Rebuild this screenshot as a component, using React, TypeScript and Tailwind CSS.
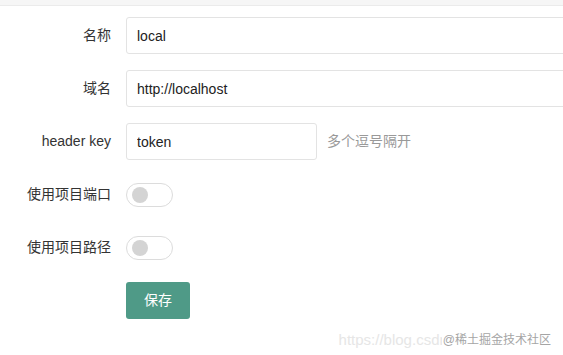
import React from "react"

const font = { fontFamily: '"Liberation Sans", Arial, "Noto Sans CJK SC", sans-serif' }

function Row({ label, children }: { label: string; children: React.ReactNode }) {
  return (
    <div className="flex items-center h-[37px] mb-[16px]">
      <label className="w-[111px] shrink-0 text-right text-[14px] text-[#333]">{label}</label>
      <div className="ml-[15px] flex items-center flex-1 min-w-0">{children}</div>
    </div>
  )
}

function Switch() {
  return (
    <div className="w-[47px] h-[24px] rounded-full border border-[#dcdcdc] bg-white flex items-center pl-[5px]">
      <div className="w-[16px] h-[16px] rounded-full bg-[#d4d4d4]" />
    </div>
  )
}

export default function App() {
  return (
    <div className="relative w-[563px] h-[355px] bg-white overflow-hidden" style={font}>
      <div className="h-[6px] bg-[#f6f6f6] border-b border-[#ebebeb]" />
      <div className="pt-[11px]">
        <Row label="名称">
          <input
            defaultValue="local"
            className="w-[460px] shrink-0 h-[37px] border border-[#e3e3e3] rounded-[3px] px-[10px] text-[14px] text-[#222] outline-none"
          />
        </Row>
        <Row label="域名">
          <input
            defaultValue="http://localhost"
            className="w-[460px] shrink-0 h-[37px] border border-[#e3e3e3] rounded-[3px] px-[10px] text-[14px] text-[#222] outline-none"
          />
        </Row>
        <Row label="header key">
          <input
            defaultValue="token"
            className="w-[191px] shrink-0 h-[37px] border border-[#e3e3e3] rounded-[3px] px-[10px] text-[14px] text-[#222] outline-none"
          />
          <span className="ml-[10px] text-[14px] text-[#999]">多个逗号隔开</span>
        </Row>
        <Row label="使用项目端口">
          <Switch />
        </Row>
        <Row label="使用项目路径">
          <Switch />
        </Row>
        <Row label="">
          <button className="w-[64px] h-[37px] rounded-[3px] bg-[#4f9a87] text-white text-[14px]">保存</button>
        </Row>
      </div>
      <div className="absolute right-[12px] top-[329px] flex items-center">
        <span className="text-[15px] text-[#e6e6e6]">https://blog.csdn</span>
        <span className="bg-white text-[12px] text-[#a5a5a5] -ml-[6px] pl-[1px]">@稀土掘金技术社区</span>
      </div>
    </div>
  )
}
